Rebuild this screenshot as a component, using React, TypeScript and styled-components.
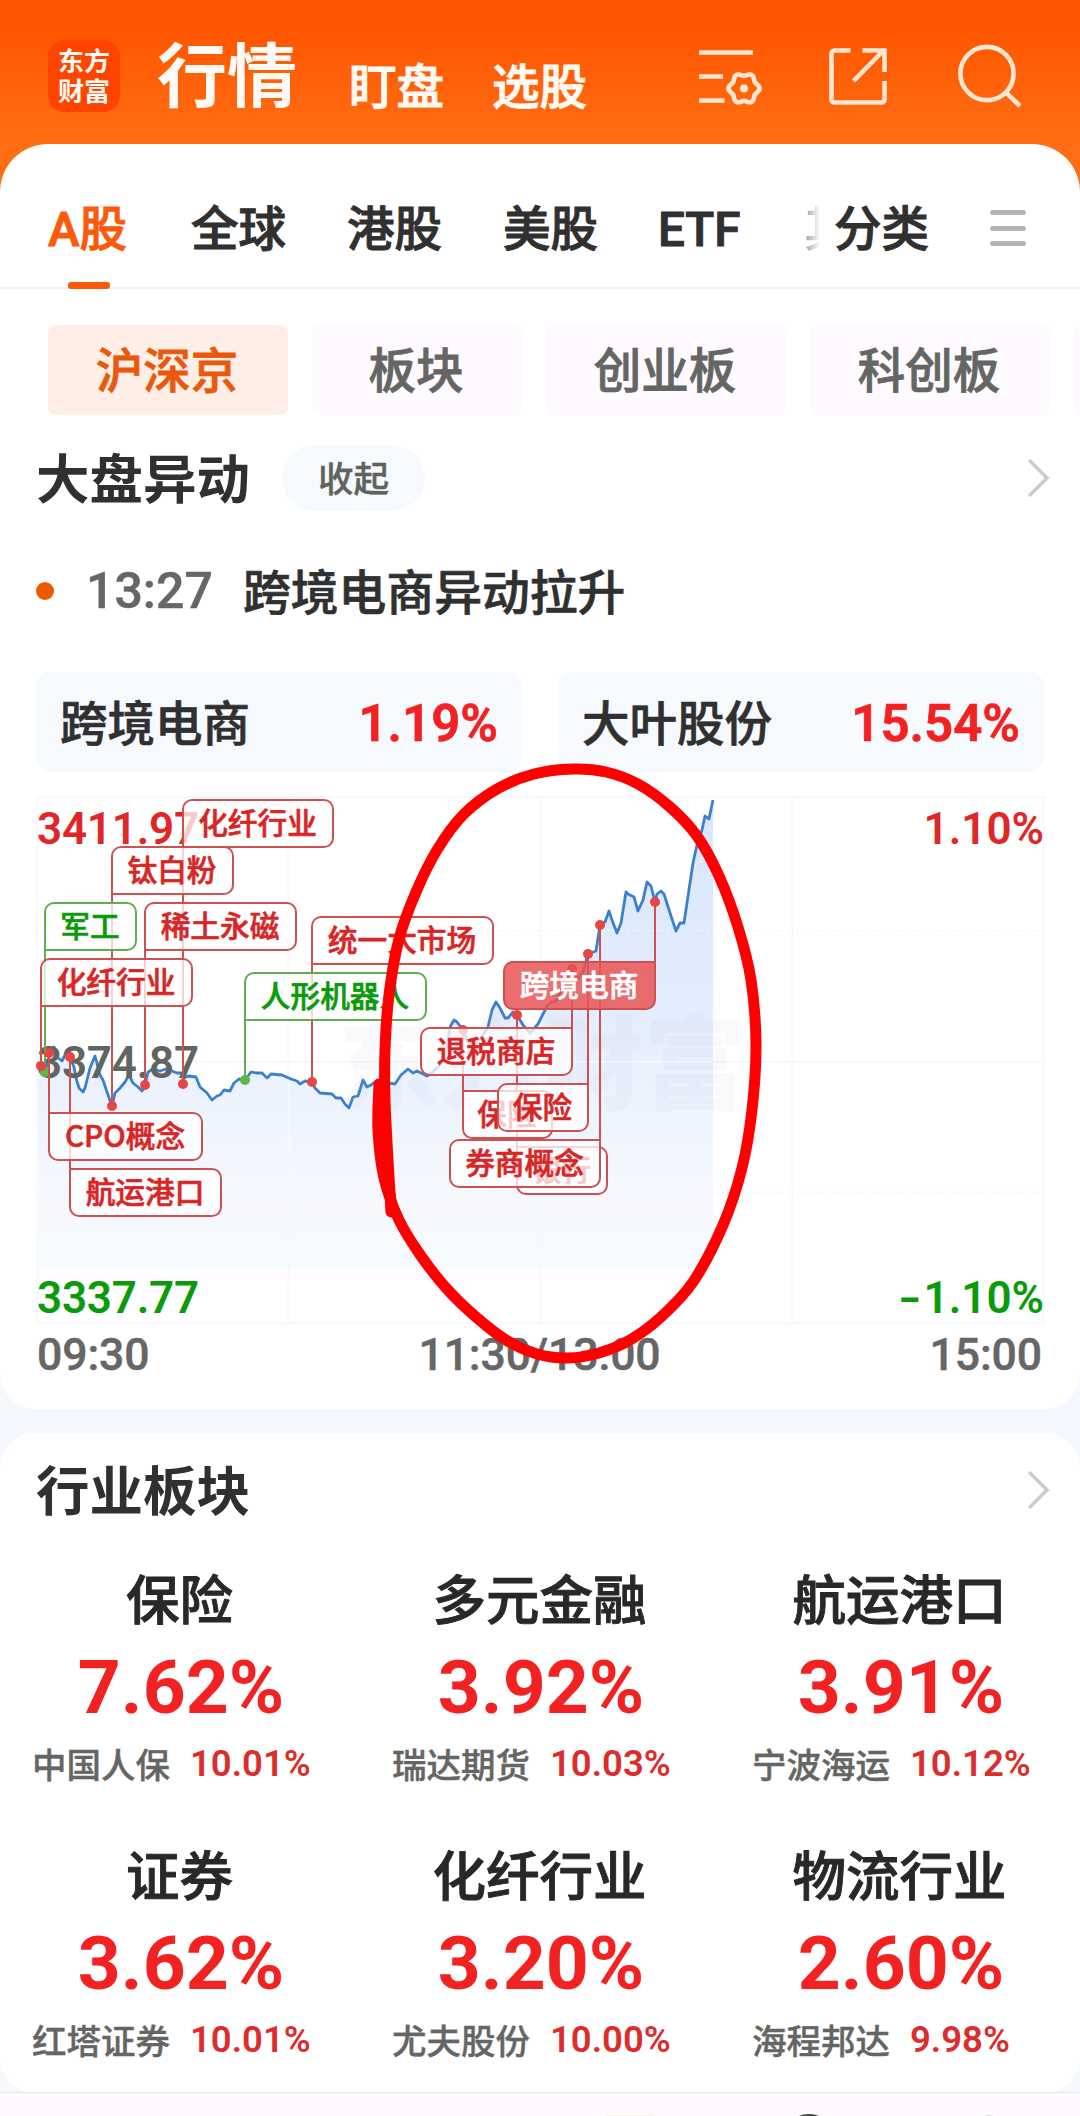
import React from 'react';
import styled, { createGlobalStyle, css } from 'styled-components';

const CJK = `'Noto Sans CJK SC', sans-serif`;
const NUM = `Roboto, 'Noto Sans CJK SC', sans-serif`;
const RED = '#f32222';
const GREEN = '#0a9a0a';

const Global = createGlobalStyle`
  * { box-sizing: border-box; }
  body { margin: 0; background: #f5f9ff; }
`;

const Page = styled.div`
  width: 1080px;
  height: 2116px;
  overflow: hidden;
  display: flex;
  flex-direction: column;
  background: #f5f9ff;
  font-family: ${CJK};
  font-weight: 500;
  color: #303030;
  white-space: nowrap;
`;

/* ---------- header ---------- */

const Header = styled.header`
  height: 192px;
  flex: none;
  padding: 0 0 48px 48px;
  display: flex;
  align-items: flex-start;
  background: linear-gradient(#ff5500 0, #ff5500 28px, #ff6e14 140px, #ff6e14 100%);
  color: #fffaf3;
`;

const Logo = styled.div`
  width: 72px;
  height: 72px;
  margin-top: 40px;
  padding: 5px 0 0 10px;
  border-radius: 16px;
  background: #ff4500;
  font-size: 26px;
  line-height: 30px;
  font-weight: 700;
`;

const HeadLink = styled.div<{ $big?: boolean; $ml: number }>`
  margin-left: ${p => p.$ml}px;
  font-size: ${p => (p.$big ? 70 : 47.5)}px;
  line-height: 80px;
  margin-top: ${p => (p.$big ? 32 : 44)}px;
  font-weight: ${p => (p.$big ? 700 : 500)};
  -webkit-text-stroke: ${p => (p.$big ? 0 : 1)}px currentColor;
`;

const HeadIcons = styled.div`
  margin: 38px 59px 0 auto;
  display: flex;
`;
const HeadIcon = styled.svg<{ $mr?: number }>`
  margin-right: ${p => p.$mr || 0}px;
  fill: none;
  stroke: #ffe6d2;
  stroke-width: 4.6px;
`;

const Panel = styled.section`
  flex: none;
  height: 1265px;
  margin-top: -48px;
  background: #fff;
  border-radius: 48px 48px 36px 36px;
`;

/* ---------- tabs ---------- */

const Tabs = styled.nav`
  height: 145px;
  padding: 50px 54px 0 48px;
  border-bottom: 2px solid #f0f0f0;
  display: flex;
`;

const Tab = styled.div<{ $w: number; $on?: boolean }>`
  position: relative;
  width: ${p => p.$w}px;
  height: 95px;
  font: 500 47.5px/72px ${NUM};
  color: ${p => (p.$on ? '#fa5a0a' : '#303030')};
  -webkit-text-stroke: 1px currentColor;
  ${p =>
    p.$on &&
    css`
      &::after {
        content: '';
        position: absolute;
        left: 20px;
        bottom: 0;
        width: 42px;
        height: 7px;
        border-radius: 3px;
        background: #fa5a0a;
      }
    `}
`;

const CutTab = styled(Tab)`
  overflow: hidden;
  margin-right: 14px;
  color: transparent;
  background: linear-gradient(90deg, #999, #fff);
  background-clip: text;
  -webkit-background-clip: text;
  -webkit-text-stroke: 0;
`;

const MenuIcon = styled.div`
  width: 36px;
  height: 36px;
  margin: 16px 0 0 auto;
  display: flex;
  flex-direction: column;
  justify-content: space-between;
`;
const Bar = styled.i`
  height: 5px;
  border-radius: 3px;
  background: #b4b4b4;
`;

const Chips = styled.div`
  display: flex;
  gap: 24px;
  padding: 36px 0 0 48px;
  overflow: hidden;
`;

const Chip = styled.div<{ $w: number; $on?: boolean }>`
  flex: none;
  width: ${p => p.$w}px;
  height: 90px;
  border-radius: 8px;
  text-align: center;
  font-size: 47.5px;
  line-height: 86px;
  text-indent: -2px;
  background: ${p => (p.$on ? '#ffeee6' : '#fefaff')};
  color: ${p => (p.$on ? '#e8590c' : '#646664')};
  -webkit-text-stroke: 0.8px currentColor;
`;

/* ---------- section heads ---------- */

const SectionHead = styled.div<{ $top: number }>`
  display: flex;
  align-items: center;
  height: 66px;
  margin-top: ${p => p.$top}px;
  padding: 0 30px 0 36px;
`;

const H2 = styled.h2`
  margin: -4px 0 0;
  font-size: 53.5px;
  line-height: 66px;
  font-weight: 700;
`;

const Fold = styled.div`
  margin-left: 32px;
  width: 143px;
  height: 66px;
  border-radius: 33px;
  background: #f6faff;
  color: #606260;
  text-align: center;
  font-size: 35.5px;
  line-height: 63px;
  -webkit-text-stroke: 0.4px currentColor;
`;

const ArrowBox = styled.span`
  margin-left: auto;
  display: flex;
`;

const NewsRow = styled.div`
  display: flex;
  align-items: center;
  height: 72px;
  margin-top: 44px;
  padding-left: 36px;
`;
const Bullet = styled.i`
  width: 18px;
  height: 18px;
  border-radius: 50%;
  background: #eb5a00;
`;
const Time = styled.span`
  width: 157px;
  margin-left: 32px;
  font: 500 50px/74px ${NUM};
  color: #666;
  -webkit-text-stroke: 0.5px currentColor;
`;
const News = styled.span`
  font-size: 47.8px;
  line-height: 72px;
  padding-bottom: 3px;
  -webkit-text-stroke: 0.7px currentColor;
`;

const Quotes = styled.div`
  display: flex;
  gap: 36px;
  padding: 0 36px;
  margin-top: 45px;
`;
const Quote = styled.div`
  flex: 1;
  height: 100px;
  padding: 0 24px;
  border-radius: 14px;
  background: #f6faff;
  display: flex;
  justify-content: space-between;
  font-size: 47.5px;
  line-height: 97px;
  -webkit-text-stroke: 0.7px currentColor;
`;
const QuotePct = styled.span`
  font: 600 51px/104px ${NUM};
  color: ${RED};
`;

/* ---------- chart ---------- */

const Chart = styled.div`
  position: relative;
  height: 552px;
`;
const Plot = styled.svg`
  position: absolute;
  left: 0;
  top: 0;
  overflow: visible;
`;
const Pen = styled(Plot)`
  z-index: 2;
  fill: none;
  stroke: #f00;
  stroke-width: 11px;
  stroke-linecap: round;
  stroke-linejoin: round;
`;
const Axis = styled.span<{ $y: number; $c: string; $right?: boolean }>`
  position: absolute;
  top: ${p => p.$y - 772}px;
  ${p => (p.$right ? 'right: 36px' : 'left: 37px')};
  font: 600 44px/50px ${NUM};
  letter-spacing: ${p => (p.$right ? 0 : -0.2)}px;
  color: ${p => p.$c};
`;
const Minus = styled.span`
  display: inline-block;
  margin-right: 5px;
  transform: scaleX(1.45);
`;
const Watermark = styled.div`
  position: absolute;
  left: 338px;
  top: 216px;
  font-size: 102px;
  line-height: 140px;
  font-weight: 900;
  color: rgba(170, 170, 200, 0.075);
`;

const Times = styled.div`
  display: flex;
  justify-content: space-between;
  padding: 4px 38px 0 37px;
  font: 500 44.5px/54px ${NUM};
  color: #666;
  -webkit-text-stroke: 0.5px currentColor;
  letter-spacing: -0.1px;
`;

type TagData = {
  t: string; x: number; y: number; w: number; ly: number;
  green?: boolean; right?: boolean; solid?: boolean;
};

const TagBox = styled.div<{ $d: TagData }>`
  position: absolute;
  left: ${p => p.$d.x - 1}px;
  top: ${p => p.$d.y - 773}px;
  width: ${p => p.$d.w + 2}px;
  height: 49px;
  border: 2px solid ${p => (p.$d.green ? '#5fb04d' : '#cf5050')};
  border-radius: ${p => {
    if (p.$d.ly > p.$d.y) return '10px 10px 10px 0';
    return p.$d.right ? '10px 0 10px 10px' : '0 10px 10px 10px';
  }};
  background: ${p => (p.$d.solid ? 'rgba(232,82,82,.84)' : 'rgba(255,255,255,.76)')};
  color: ${p => (p.$d.solid ? '#fff' : p.$d.green ? GREEN : '#d92525')};
  -webkit-text-stroke: 0.6px currentColor;
  text-align: center;
  font-size: 29.7px;
  line-height: 42px;
  text-indent: -1px;
`;
const Leader = styled.i<{ $d: TagData }>`
  position: absolute;
  width: 2px;
  left: ${p => (p.$d.right ? p.$d.x + p.$d.w - 1 : p.$d.x - 1)}px;
  top: ${p => (p.$d.ly > p.$d.y ? p.$d.y + 48 : p.$d.ly) - 773}px;
  height: ${p => (p.$d.ly > p.$d.y ? p.$d.ly - p.$d.y - 48 : p.$d.y - p.$d.ly)}px;
  background: ${p => (p.$d.green ? '#5fb04d' : '#cf5050')};
`;
const Dot = styled.i<{ $d: TagData }>`
  position: absolute;
  width: 10px;
  height: 10px;
  border-radius: 50%;
  left: ${p => (p.$d.right ? p.$d.x + p.$d.w : p.$d.x) - 5}px;
  top: ${p => p.$d.ly - 777}px;
  background: ${p => (p.$d.green ? '#5cb745' : '#e84545')};
`;

const TAGS: TagData[] = [
  { t: '化纤行业', x: 183, y: 800, w: 150, ly: 1084 },
  { t: '钛白粉', x: 112, y: 847, w: 121, ly: 1106 },
  { t: '稀土永磁', x: 145, y: 903, w: 151, ly: 1085 },
  { t: '军工', x: 45, y: 903, w: 91, ly: 1072, green: true },
  { t: '化纤行业', x: 41, y: 959, w: 151, ly: 1066 },
  { t: '航运港口', x: 70, y: 1169, w: 151, ly: 1057 },
  { t: 'CPO概念', x: 49, y: 1113, w: 153, ly: 1053 },
  { t: '统一大市场', x: 312, y: 917, w: 181, ly: 1082 },
  { t: '人形机器人', x: 245, y: 973, w: 181, ly: 1080, green: true },
  { t: '银行', x: 517, y: 1147, w: 90, ly: 1015 },
  { t: '保险', x: 463, y: 1091, w: 89, ly: 1030 },
  { t: '退税商店', x: 421, y: 1028, w: 151, ly: 969, right: true },
  { t: '保险', x: 498, y: 1084, w: 90, ly: 954, right: true },
  { t: '券商概念', x: 450, y: 1140, w: 150, ly: 925, right: true },
  { t: '跨境电商', x: 504, y: 962, w: 151, ly: 902, right: true, solid: true },
];

const PRICE =
  '37,1063 41,1066 45,1072 50,1053 54,1047 57,1057 62,1061 65,1055 70,1057 74,1067 76,1078 79,1088 83,1092 85,1088 90,1068 95,1056 100,1075 103,1080 107,1092 112,1106 115,1093 120,1088 125,1082 129,1075 133,1083 138,1087 142,1091 145,1085 148,1072 153,1069 160,1071 166,1069 172,1071 177,1073 181,1073 184,1078 188,1076 196,1077 200,1087 207,1093 212,1100 217,1096 220,1095 224,1090 230,1091 234,1083 239,1079 245,1080 251,1072 256,1073 262,1073 267,1078 271,1074 282,1075 291,1079 297,1081 300,1084 305,1081 312,1082 315,1088 320,1093 332,1094 336,1098 341,1098 345,1104 349,1108 353,1097 358,1096 363,1080 367,1087 371,1085 378,1080 389,1083 395,1084 401,1075 408,1069 413,1073 417,1071 427,1076 433,1072 440,1065 447,1047 450,1027 454,1020 457,1022 463,1030 468,1042 477,1043 488,1027 492,1010 496,1002 500,1008 505,1018 508,1018 513,1012 517,1015 523,1025 530,1033 538,1024 547,1006 552,1002 556,1001 560,993 571,969 578,978 583,972 588,954 596,951 600,925 605,922 609,911 612,920 617,933 621,923 626,892 628,894 634,897 638,911 643,900 647,882 651,886 655,902 657,894 661,891 664,894 670,913 676,931 680,923 684,923 693,863 697,845 702,830 705,816 709,819 713,800';

type P = [number, number];
const smooth = (pts: P[]) =>
  pts.slice(0, -1).reduce((d, p, i) => {
    const a = pts[i - 1] || p, b = pts[i + 1], c = pts[i + 2] || b;
    return `${d} C${p[0] + (b[0] - a[0]) / 6},${p[1] + (b[1] - a[1]) / 6} ${b[0] - (c[0] - p[0]) / 6},${b[1] - (c[1] - p[1]) / 6} ${b[0]},${b[1]}`;
  }, `M${pts[0]}`);

const PEN: P[] = [
  [379, 1084], [378, 1130], [384, 1178], [399, 1220], [421, 1256], [447, 1289], [476, 1317], [506, 1340],
  [537, 1354], [568, 1358], [599, 1353], [630, 1340], [661, 1317], [693, 1282], [723, 1225], [742, 1168],
  [752, 1110], [756, 1044], [751, 980], [738, 927], [719, 876], [697, 836], [670, 807], [638, 784],
  [606, 772], [573, 769], [534, 774], [497, 789], [463, 815], [437, 850], [416, 892], [399, 939],
  [389, 995], [385, 1050], [385, 1100], [388, 1160], [391, 1212],
];

/* ---------- sectors ---------- */

const Sectors = styled.section`
  flex: none;
  height: 660px;
  margin-top: 24px;
  padding-top: 1px;
  background: #fff;
  border-radius: 36px;
`;
const Grid = styled.div`
  display: grid;
  grid-template-columns: repeat(3, 360px);
  grid-auto-rows: 276px;
  padding-top: 38px;
`;
const Cell = styled.div`
  display: flex;
  flex-direction: column;
`;
const SectorName = styled.div`
  text-align: center;
  text-indent: -1px;
  font-size: 53.5px;
  line-height: 72px;
  color: #282828;
  -webkit-text-stroke: 0.9px currentColor;
`;
const SectorPct = styled.div`
  margin-top: 12px;
  text-align: center;
  font: 700 75px/84px ${NUM};
  padding-left: 2px;
  color: ${RED};
`;
const Leading = styled.div`
  display: flex;
  align-items: center;
  gap: 20px;
  margin-top: 5px;
  padding-left: 32px;
  height: 60px;
`;
const Stock = styled.span`
  font-size: 34.5px;
  line-height: 60px;
  padding-bottom: 2px;
  color: #646664;
  -webkit-text-stroke: 0.4px currentColor;
`;
const StockPct = styled.span`
  font: 600 36.5px/60px ${NUM};
  color: #dc2c2c;
`;

const SECTORS = [
  ['保险', '7.62%', '中国人保', '10.01%'],
  ['多元金融', '3.92%', '瑞达期货', '10.03%'],
  ['航运港口', '3.91%', '宁波海运', '10.12%'],
  ['证券', '3.62%', '红塔证券', '10.01%'],
  ['化纤行业', '3.20%', '尤夫股份', '10.00%'],
  ['物流行业', '2.60%', '海程邦达', '9.98%'],
];

const Dock = styled.footer`
  flex: none;
  position: relative;
  height: 60px;
  margin-top: -1px;
  border-top: 1px solid #e2e4e8;
  background: #fefaff;
  display: flex;
`;

const Arrow = () => (
  <ArrowBox>
    <svg width="23" height="40" viewBox="0 0 23 40" fill="none" stroke="#ccc" strokeWidth="3.6">
      <path d="M2 2 20 20 2 38" />
    </svg>
  </ArrowBox>
);

const gear = Array.from({ length: 73 }, (_, i) => {
  const a = (i / 72) * Math.PI * 2;
  const r = 14 + 1.5 * Math.cos(6 * a);
  return `${(47 + r * Math.cos(a)).toFixed(2)},${(50.4 + r * Math.sin(a)).toFixed(2)}`;
}).join(' ');

export default function App() {
  return (
    <Page>
      <Global />
      <Header>
        <Logo>东方<br />财富</Logo>
        <HeadLink $big $ml={37}>行情</HeadLink>
        <HeadLink $ml={52}>盯盘</HeadLink>
        <HeadLink $ml={48}>选股</HeadLink>
        <HeadIcons>
          <HeadIcon width="66" height="76" $mr={58}>
            <path d="M2 14.500h54M2 38.500h24M2 62.500h25.500" />
            <polygon points={gear} strokeLinejoin="round" />
            <circle cx="47" cy="50.400" r="4" fill="#ffe6d2" stroke="none" />
          </HeadIcon>
          <HeadIcon width="66" height="76" $mr={68}>
            <path d="M29.500 12.500H13.500a3 3 0 0 0-3 3v46a3 3 0 0 0 3 3h47a3 3 0 0 0 3-3V43M41.500 12.500h22V34M62 13 32.500 43" />
          </HeadIcon>
          <HeadIcon width="66" height="76">
            <circle cx="32" cy="35.500" r="26.600" />
            <path d="M51 54.500 65 68" />
          </HeadIcon>
        </HeadIcons>
      </Header>

      <Panel>
        <Tabs>
          <Tab $w={143} $on>A股</Tab>
          <Tab $w={156}>全球</Tab>
          <Tab $w={156}>港股</Tab>
          <Tab $w={155}>美股</Tab>
          <Tab $w={146}>ETF</Tab>
          <CutTab $w={16}>其</CutTab>
          <Tab $w={100}>分类</Tab>
          <MenuIcon><Bar /><Bar /><Bar /></MenuIcon>
        </Tabs>
        <Chips>
          <Chip $w={240} $on>沪深京</Chip>
          <Chip $w={210}>板块</Chip>
          <Chip $w={240}>创业板</Chip>
          <Chip $w={240}>科创板</Chip>
          <Chip $w={240} />
        </Chips>
        <SectionHead $top={30}>
          <H2>大盘异动</H2>
          <Fold>收起</Fold>
          <Arrow />
        </SectionHead>
        <NewsRow>
          <Bullet />
          <Time>13:27</Time>
          <News>跨境电商异动拉升</News>
        </NewsRow>
        <Quotes>
          <Quote>跨境电商<QuotePct>1.19%</QuotePct></Quote>
          <Quote>大叶股份<QuotePct>15.54%</QuotePct></Quote>
        </Quotes>

        <Chart>
          <Plot width="1080" height="552" viewBox="0 772 1080 552">
            <defs>
              <linearGradient id="area" x1="0" x2="0" y1="800" y2="1268" gradientUnits="userSpaceOnUse">
                <stop offset="0" stopColor="#d8e6fc" />
                <stop offset="0.45" stopColor="#e4edfd" />
                <stop offset="0.7" stopColor="#eff5fe" />
                <stop offset="0.85" stopColor="#f6f8fe" />
                <stop offset="1" stopColor="#f7faff" />
              </linearGradient>
            </defs>
            <path d={`M37,1268 L${PRICE} L713,1268Z`} fill="url(#area)" />
            <rect x="37" y="1268" width="676" height="12" fill="#fffbfe" />
            <path d="M37.500 797V1323.500H1043.500V797ZM288.500 797V1323M540.500 797V1323M792.500 797V1323M37 1062H1043" fill="none" stroke="#f5f8fe" strokeWidth="2" />
            <path d="M37 930.500H1043M37 1192.500H1043" stroke="#f3f5fa" strokeWidth="1.500" strokeDasharray="2 3" />
            <polyline points={PRICE} fill="none" stroke="#3b80cf" strokeWidth="2.800" strokeLinejoin="round" />
          </Plot>
          <Watermark>东方财富</Watermark>
          <Axis $y={804} $c="#e02626">3411.97</Axis>
          <Axis $y={1038} $c="#626462">3374.87</Axis>
          <Axis $y={1273} $c={GREEN}>3337.77</Axis>
          <Axis $y={804} $c="#e02626" $right>1.10%</Axis>
          <Axis $y={1273} $c={GREEN} $right><Minus>-</Minus>1.10%</Axis>
          {TAGS.map((d, i) => (
            <React.Fragment key={i}>
              <Leader $d={d} />
              <Dot $d={d} />
              <TagBox $d={d}>{d.t}</TagBox>
            </React.Fragment>
          ))}
          <Pen width="1080" height="552" viewBox="0 772 1080 552">
            <path d={smooth(PEN)} />
            <path d="M382 1084 382 1130 388 1180 392 1208" />
          </Pen>
        </Chart>
        <Times>
          <span>09:30</span>
          <span>11:30/13:00</span>
          <span>15:00</span>
        </Times>
      </Panel>

      <Sectors>
        <SectionHead $top={23}>
          <H2>行业板块</H2>
          <Arrow />
        </SectionHead>
        <Grid>
          {SECTORS.map(([name, pct, stock, sp]) => (
            <Cell key={name}>
              <SectorName>{name}</SectorName>
              <SectorPct>{pct}</SectorPct>
              <Leading>
                <Stock>{stock}</Stock>
                <StockPct>{sp}</StockPct>
              </Leading>
            </Cell>
          ))}
        </Grid>
      </Sectors>
      <Dock>
        <svg width="1080" height="60">
          <rect x="605" y="22" width="50" height="20" fill="#fdeee6" />
          <circle cx="809" cy="47" r="24" fill="none" stroke="#444" strokeWidth="4" />
          <circle cx="989" cy="44" r="20" fill="none" stroke="#aaa" strokeWidth="3" />
        </svg>
      </Dock>
    </Page>
  );
}
